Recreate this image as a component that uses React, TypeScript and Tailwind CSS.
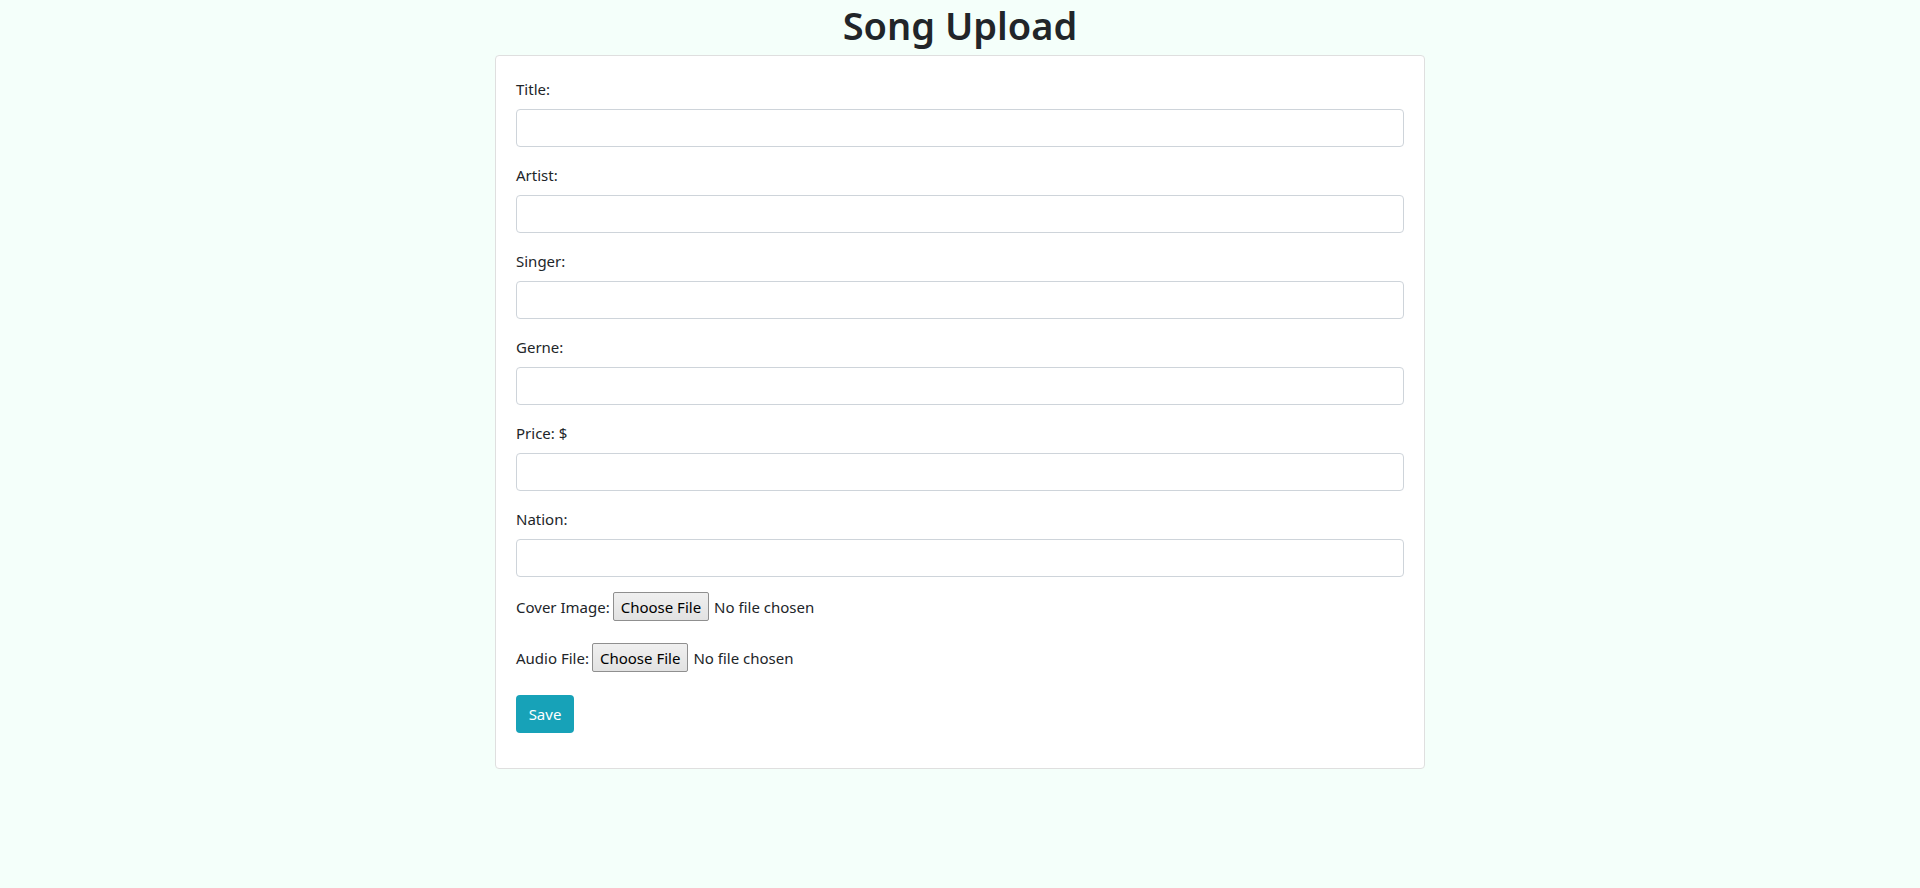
const fields = ["Title:", "Artist:", "Singer:", "Gerne:", "Price: $", "Nation:"];

function FileRow({ label }: { label: string }) {
	return (
		<div className="mb-4">
			<label className="inline-flex items-center mb-2 h-[27px]">
				<span>{label}</span>
				<span className="ml-[3px] inline-flex items-center h-[29px] px-[7px] border border-[#8f8f8f] rounded-[2px] bg-gradient-to-b from-[#f0f0f0] to-[#e2e2e2] text-black">
					Choose File
				</span>
				<span className="ml-[5px]">No file chosen</span>
			</label>
		</div>
	);
}

export default function App() {
	return (
		<div
			className="min-h-[888px] bg-[#f4fffa] text-[#212529] text-base leading-6"
			style={{ fontFamily: '"Noto Sans", "Open Sans", sans-serif' }}
		>
			<h1 className="text-center text-[38px] leading-[48px] font-semibold pt-px mb-[6px]">Song Upload</h1>
			<div className="mx-auto w-[930px] bg-white border border-[#dfdfdf] rounded pt-[21px] pb-[19px] px-5">
				{fields.map((f) => (
					<div key={f} className="mb-4">
						<label className="block mb-2 text-[15px]">{f}</label>
						<input
							type="text"
							className="block w-full h-[38px] border border-[#ced4da] rounded px-3 bg-white outline-none"
						/>
					</div>
				))}
				<div className="text-[15px]">
					<FileRow label="Cover Image:" />
					<FileRow label="Audio File:" />
				</div>
				<button
					type="button"
					className="mb-4 h-[38px] w-[58px] rounded bg-[#17a2b8] text-white text-[15px]"
				>
					Save
				</button>
			</div>
		</div>
	);
}
